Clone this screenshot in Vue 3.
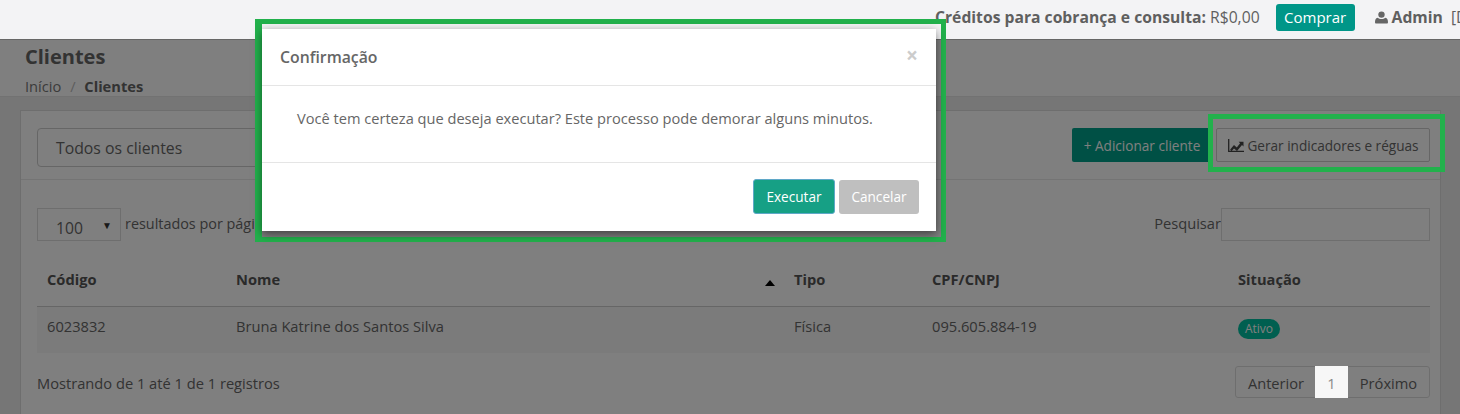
<template>
  <div class="page">
    <header class="topbar">
      <span class="credits"><b>Créditos para cobrança e consulta:</b> R$0,00</span>
      <button class="buy">Comprar</button>
      <span class="user">
        <svg class="user-icon" viewBox="0 0 16 16"><circle cx="8" cy="4.4" r="3.9" fill="currentColor"/><path d="M1.5 15.5c-1 0-1.5-.6-1.5-1.6C0 11 .7 8.4 3.3 8.2 4.5 9.2 6 9.800 8 9.800s3.500-.6 4.700-1.600c2.600.2 3.300 2.800 3.300 5.700 0 1-.5 1.600-1.500 1.600z" fill="currentColor"/></svg>
        <b>Admin</b> [D
      </span>
    </header>

    <section class="title-bar">
      <h1>Clientes</h1>
      <div class="crumbs">Início <i>/</i> <b>Clientes</b></div>
    </section>

    <main class="content">
      <div class="card">
        <div class="card-head">
          <div class="filter">Todos os clientes</div>
          <div class="actions">
            <button class="add">+ Adicionar cliente</button>
            <button class="gen">
              <svg class="chart" viewBox="0 0 16 13"><path d="M.7 0v12.300H16" fill="none" stroke="currentColor" stroke-width="1.300"/><path d="M2.200 10.500 6 6l2.800 2.500 3.300-4.300-1.500-1.500H15.500v4.800l-1.500-1.500-5 6-3-2.500-2.700 3z" fill="currentColor"/></svg>
              Gerar indicadores e réguas
            </button>
          </div>
        </div>
        <div class="card-body">
          <div class="controls">
            <div class="length">
              <div class="length-box">100<span class="caret">▼</span></div>
              resultados por página
            </div>
            <label class="search">Pesquisar<span class="search-box"></span></label>
          </div>
          <table>
            <thead>
              <tr>
                <th v-for="c in columns" :key="c.label" :style="{ width: c.width + 'px' }">
                  {{ c.label }}<span v-if="c.sorted" class="sort"></span>
                </th>
              </tr>
            </thead>
            <tbody>
              <tr>
                <td>6023832</td>
                <td>Bruna Katrine dos Santos Silva</td>
                <td>Física</td>
                <td>095.605.884-19</td>
                <td><span class="badge">Ativo</span></td>
              </tr>
            </tbody>
          </table>
          <div class="foot">
            <span class="info">Mostrando de 1 até 1 de 1 registros</span>
            <div class="pager">
              <span class="prev">Anterior</span><span class="current">1</span><span class="next">Próximo</span>
            </div>
          </div>
        </div>
      </div>
    </main>

    <div class="backdrop"></div>
    <div class="mark mark-modal"></div>
    <div class="mark mark-gen"></div>

    <div class="modal">
      <div class="modal-head">
        <span>Confirmação</span>
        <span class="close">×</span>
      </div>
      <div class="modal-body">Você tem certeza que deseja executar? Este processo pode demorar alguns minutos.</div>
      <div class="modal-foot">
        <button class="run">Executar</button>
        <button class="cancel">Cancelar</button>
      </div>
    </div>
  </div>
</template>

<script setup>
const columns = [
  { label: 'Código', width: 189 },
  { label: 'Nome', width: 558, sorted: true },
  { label: 'Tipo', width: 138 },
  { label: 'CPF/CNPJ', width: 306 },
  { label: 'Situação', width: 202 }
]
</script>

<style>
html, body { margin: 0; overflow: hidden; }
</style>

<style scoped>
.page {
  position: relative;
  display: flex;
  flex-direction: column;
  width: 1460px;
  height: 414px;
  overflow: hidden;
  background: #f0f0f0;
  color: #666;
  font-family: "Open Sans", sans-serif;
  font-size: 14.660px;
}
button { font-family: inherit; font-size: 13.600px; border: 0; cursor: pointer; }

.topbar {
  flex: none;
  display: flex;
  align-items: center;
  height: 39px;
  padding: 0 0 5px 935px;
  box-sizing: border-box;
  background: #f3f3f5;
  white-space: nowrap;
  font-size: 15.700px;
  color: #5f5f5f;
}
.buy {
  flex: none;
  margin-left: 16px;
  width: 79px;
  height: 27px;
  border-radius: 3px;
  background: #009688;
  color: #fff;
  font-size: 15px;
}
.user { margin-left: 20px; display: flex; align-items: center; gap: 4px; white-space: pre; }
.user-icon { width: 13px; height: 13px; color: #666; }

.title-bar {
  flex: none;
  height: 58px;
  padding: 5px 25px 0;
  box-sizing: border-box;
  background: #fff;
  border-top: 1px solid #ccc;
  border-bottom: 1px solid #e4e4e4;
}
h1 { margin: 0; font-size: 20px; line-height: 24px; font-weight: 700; color: #666; }
.crumbs { margin-top: 7px; line-height: 20px; color: #777; }
.crumbs i { font-style: normal; margin: 0 5px; color: #bbb; }
.crumbs b { color: #666; }

.content { flex: 1; display: flex; padding: 13px 19px 0 20px; background: #ededed; }
.card { flex: 1; background: #fff; border: 1px solid #ddd; border-bottom: 0; }
.card-head {
  display: flex;
  justify-content: space-between;
  height: 69px;
  padding: 17px 10px 0 16px;
  box-sizing: border-box;
  border-bottom: 1px solid #e9e9e9;
}
.filter {
  width: 400px;
  height: 39px;
  padding-left: 18px;
  box-sizing: border-box;
  border: 1px solid #ccc;
  border-radius: 4px;
  line-height: 38px;
  font-size: 15.800px;
}
.actions { display: flex; gap: 4px; height: 34px; }
.add { width: 140px; height: 34px; padding: 0; border-radius: 2px; background: #00a08a; color: #fff; }
.gen {
  display: flex;
  align-items: center;
  justify-content: center;
  gap: 3px;
  width: 214px;
  height: 34px;
  padding: 0 0 0 1px;
  background: #fff;
  border: 1px solid #ccc;
  border-radius: 2px;
  color: #666;
}
.chart { width: 16px; height: 13px; color: #444; }

.card-body { padding: 28px 10px 0 16px; }
.controls { display: flex; justify-content: space-between; height: 33px; }
.length { display: flex; align-items: flex-start; gap: 4px; line-height: 32px; font-size: 14.400px; }
.length-box {
  position: relative;
  width: 84px;
  height: 33px;
  padding-left: 18px;
  box-sizing: border-box;
  border: 1px solid #ddd;
  line-height: 38px;
  font-size: 15.700px;
}
.caret { position: absolute; right: 8px; top: -3px; font-size: 10px; color: #333; }
.search { display: flex; align-items: flex-start; line-height: 31px; }
.search-box { width: 207px; height: 31px; border: 1px solid #ddd; }

table { width: 1393px; margin-top: 11px; border-collapse: collapse; table-layout: fixed; }
th {
  position: relative;
  box-sizing: border-box;
  height: 54px;
  padding: 0 10px;
  text-align: left;
  font-weight: 700;
  color: #555;
  border-bottom: 1px solid #ccc;
}
td { box-sizing: border-box; height: 47px; padding: 9px 10px 0; vertical-align: top; }
tbody tr { background: #f6f6f6; }
.sort {
  position: absolute;
  right: 9px;
  top: 28px;
  border: 5.500px solid transparent;
  border-top: 0;
  border-bottom: 6px solid #000;
}
.badge {
  display: block;
  width: 42px;
  height: 20px;
  margin-top: 3px;
  border-radius: 10px;
  background: #00bfa0;
  color: #fff;
  font-size: 12px;
  line-height: 19px;
  text-align: center;
}

.foot { display: flex; justify-content: space-between; align-items: flex-start; margin-top: 13px; }
.info { line-height: 35px; }
.pager { display: flex; height: 30px; border: 1px solid #ddd; border-radius: 3px; line-height: 32px; }
.prev { width: 79px; padding-left: 1px; box-sizing: border-box; text-align: center; }
.next { width: 81px; text-align: center; }
.current {
  position: relative;
  z-index: 2;
  width: 33px;
  margin: -1px 0;
  line-height: 34px;
  text-align: center;
  background: #f7f7f7;
  color: #888;
}

.backdrop { position: absolute; z-index: 1; inset: 39px 0 0; background: rgba(0, 0, 0, .5); }
.mark { position: absolute; z-index: 2; border: 5px solid #22b14c; box-sizing: border-box; }
.mark-modal { left: 255px; top: 19px; width: 691px; height: 223px; border-left-width: 7px; }
.mark-gen { left: 1208px; top: 114px; width: 237px; height: 58px; }

.modal {
  position: absolute;
  z-index: 3;
  left: 262px;
  top: 29px;
  width: 674px;
  height: 202px;
  background: #fff;
  box-shadow: 0 3px 9px rgba(0, 0, 0, .5);
}
.modal-head {
  display: flex;
  justify-content: space-between;
  height: 57px;
  padding: 0 18px 0 18px;
  box-sizing: border-box;
  border-bottom: 1px solid #e5e5e5;
  line-height: 56px;
  font-size: 15.800px;
  font-weight: 600;
  color: #666;
}
.close { font-size: 21px; font-weight: 700; color: #ccc; line-height: 52px; }
.modal-body {
  height: 77px;
  padding: 22px 35px 0;
  box-sizing: border-box;
  border-bottom: 1px solid #e5e5e5;
  line-height: 20px;
  font-size: 14.610px;
}
.modal-foot { display: flex; justify-content: flex-end; align-items: flex-start; gap: 4px; padding: 16px 17px 0 0; }
.run {
  width: 82px;
  height: 35px;
  padding: 0;
  border: 1px solid #5fa8c8;
  border-radius: 3px;
  background: #16a085;
  color: #fff;
}
.cancel { width: 80px; height: 34px; margin-top: 1px; padding: 0 0 2px; border-radius: 3px; background: #bfbfbf; color: #fff; }
</style>
